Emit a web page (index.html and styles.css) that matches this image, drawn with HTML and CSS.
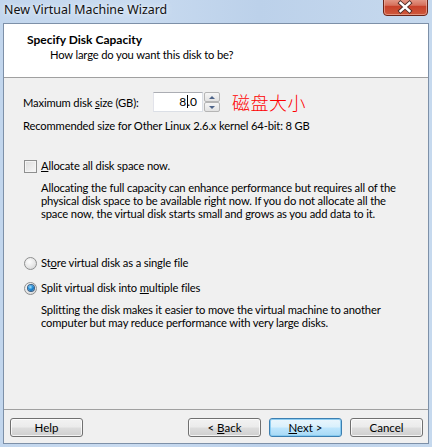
FILE: index.html
```html
<!DOCTYPE html>
<html>
<head>
<meta charset="utf-8">
<title>New Virtual Machine Wizard</title>
<link rel="stylesheet" href="styles.css">
</head>
<body>
<div class="window">
  <div class="titlebar">
    <span class="title">New Virtual Machine Wizard</span>
    <div class="close">
      <svg width="45" height="16" viewBox="0 0 45 16">
        <defs>
          <linearGradient id="cg" x1="0" y1="0" x2="0" y2="1">
            <stop offset="0" stop-color="#e9a99a"/>
            <stop offset="0.45" stop-color="#d6715c"/>
            <stop offset="0.5" stop-color="#c8412a"/>
            <stop offset="1" stop-color="#cf5a3c"/>
          </linearGradient>
        </defs>
        <path d="M0.5 -3 V12 Q0.5 15.5 4 15.5 H41 Q44.5 15.5 44.5 12 V-3 Z" fill="url(#cg)" stroke="#6a2418"/>
        <path d="M1.5 -3 V12 Q1.5 14.5 4 14.5 H41 Q43.5 14.5 43.5 12 V-3" fill="none" stroke="#f0b9aa" stroke-opacity="0.6"/>
        <path d="M17.5 3 L26.5 11 M26.5 3 L17.5 11" stroke="#4a2a26" stroke-width="4.2" stroke-linecap="square"/>
        <path d="M17.5 3 L26.5 11 M26.5 3 L17.5 11" stroke="#ffffff" stroke-width="2.4" stroke-linecap="square"/>
      </svg>
    </div>
  </div>
  <div class="client">
    <div class="header">
      <div class="h-title">Specify Disk Capacity</div>
      <div class="h-sub">How large do you want this disk to be?</div>
    </div>
    <div class="body">
      <div class="size-row">
        <label class="size-label">Maximum disk <u>s</u>ize (GB):</label>
        <div class="spin">
          <div class="spin-input">8<span class="caret"></span>.0</div>
          <div class="spin-btns">
            <div class="spin-btn"><span class="tri-up"></span></div>
            <div class="spin-btn"><span class="tri-down"></span></div>
          </div>
        </div>
        <span class="cn">磁盘大小</span>
      </div>
      <div class="rec">Recommended size for Other Linux 2.6.x kernel 64-bit: 8 GB</div>
      <div class="opt opt-check">
        <span class="checkbox"></span>
        <span><u>A</u>llocate all disk space now.</span>
      </div>
      <p class="desc">Allocating the full capacity can enhance performance but requires all of the<br>physical disk space to be available right now. If you do not allocate all the<br>space now, the virtual disk starts small and grows as you add data to it.</p>
      <div class="opt opt-r1">
        <span class="radio"></span>
        <span>St<u>o</u>re virtual disk as a single file</span>
      </div>
      <div class="opt opt-r2">
        <span class="radio checked"></span>
        <span>Split virtual disk into <u>m</u>ultiple files</span>
      </div>
      <p class="desc">Splitting the disk makes it easier to move the virtual machine to another<br>computer but may reduce performance with very large disks.</p>
    </div>
    <div class="footer">
      <button class="btn">Help</button>
      <div class="spacer"></div>
      <button class="btn">&lt; <u>B</u>ack</button>
      <button class="btn default"><u>N</u>ext &gt;</button>
      <button class="btn">Cancel</button>
    </div>
  </div>
</div>
</body>
</html>
```
FILE: styles.css
```css
html, body {
  margin: 0;
  padding: 0;
}

.window {
  width: 432px;
  height: 447px;
  box-sizing: border-box;
  padding: 0 3px 3px 3px;
  display: flex;
  flex-direction: column;
  background: linear-gradient(90deg, #c2d6ed 0%, #c9dbf0 30%, #bcd1ea 60%, #c6d9ee 100%);
  font-family: Lato, "Noto Sans", sans-serif;
  font-size: 11.2px;
  letter-spacing: -0.15px;
  color: #000;
}

.titlebar {
  height: 23px;
  display: flex;
  justify-content: space-between;
  align-items: flex-start;
  flex: none;
}

.title {
  font-family: "Noto Sans", sans-serif;
  font-size: 12.4px;
  letter-spacing: 0;
  line-height: 16px;
  padding: 2px 0 0 1px;
  color: #111;
  text-shadow: 0 0 6px #e8f0fa, 0 0 3px #e8f0fa;
}

.close {
  width: 45px;
  height: 16px;
  margin-right: 1px;
  line-height: 0;
}

.client {
  flex: 1;
  border: 1px solid #7d90a8;
  background: #f0f0f0;
  display: flex;
  flex-direction: column;
  min-height: 0;
}

.header {
  flex: none;
  background: #fff;
  border-bottom: 1px solid #a0a0a0;
  padding-top: 8px;
  height: 45px;
}

.h-title {
  font-weight: bold;
  font-size: 12px;
  letter-spacing: 0;
  line-height: 15px;
  padding-left: 23px;
}

.h-sub {
  line-height: 15px;
  padding-left: 46px;
}

.body {
  padding-left: 19px;
  flex: 1;
}

.size-row {
  margin-top: 14px;
  height: 20px;
  display: flex;
  align-items: center;
}

.size-label {
  width: 130px;
  flex: none;
}

.spin {
  display: flex;
  align-items: stretch;
  height: 20px;
}

.spin-input {
  width: 50px;
  box-sizing: border-box;
  border: 1px solid #dbdfe6;
  border-top-color: #abadb3;
  border-left-color: #e2e3ea;
  background: #fff;
  text-align: right;
  padding-right: 5px;
  line-height: 18px;
  font-size: 12px;
  letter-spacing: 0;
}

.caret {
  display: inline-block;
  width: 1px;
  height: 13px;
  margin: 0 -1px 0 1px;
  background: #000;
  vertical-align: -2px;
  position: relative;
}

.spin-btns {
  width: 16px;
  margin-left: 1px;
  display: flex;
  flex-direction: column;
}

.spin-btn {
  flex: 1;
  border: 1px solid #b5b5b5;
  border-radius: 2px;
  background: linear-gradient(#f6f6f6, #e2e2e2);
  display: flex;
  align-items: center;
  justify-content: center;
}

.tri-up {
  width: 0;
  height: 0;
  border-left: 3px solid transparent;
  border-right: 3px solid transparent;
  border-bottom: 3px solid #4e6489;
}

.tri-down {
  width: 0;
  height: 0;
  border-left: 3px solid transparent;
  border-right: 3px solid transparent;
  border-top: 3px solid #4e6489;
}

.cn {
  margin-left: 12px;
  color: #ff0000;
  font-family: "Noto Sans CJK SC", sans-serif;
  font-size: 18px;
  line-height: 20px;
  font-weight: 300;
  letter-spacing: 0.5px;
}

.rec {
  margin-top: 7px;
  line-height: 14px;
}

.opt {
  display: flex;
  align-items: center;
  line-height: 14px;
}

.opt-check {
  margin-top: 26px;
}

.opt-r1 {
  margin-top: 36px;
}

.opt-r2 {
  margin-top: 11px;
}

.checkbox {
  width: 11px;
  height: 11px;
  margin-left: 1px;
  margin-right: 4px;
  border: 1px solid #8e8f8f;
  background: linear-gradient(135deg, #dcdcdc, #f8f8f8);
  box-shadow: inset 0 0 0 1px #f4f4f4;
  flex: none;
}

.radio {
  width: 11px;
  height: 11px;
  margin-left: 1px;
  margin-right: 4px;
  border: 1px solid #8e8f8f;
  border-radius: 50%;
  background: radial-gradient(circle at 40% 35%, #fdfdfd 0%, #e6e6e6 55%, #cfcfcf 100%);
  flex: none;
  display: flex;
  align-items: center;
  justify-content: center;
}

.radio.checked::after {
  content: "";
  width: 6px;
  height: 6px;
  border-radius: 50%;
  background: radial-gradient(circle at 40% 35%, #a9e2fb 0%, #1e8ad6 45%, #0d4f8f 100%);
  box-shadow: 0 0 0 1px #365f88;
}

.desc {
  margin: 8px 0 0 0;
  padding-left: 18px;
  line-height: 13px;
  white-space: nowrap;
}

.footer {
  flex: none;
  border-top: 1px solid #a0a0a0;
  padding: 8px 5px 6px 6px;
  display: flex;
  gap: 8px;
}

.spacer {
  flex: 1;
}

.btn {
  width: 73px;
  height: 19px;
  box-sizing: border-box;
  padding: 0;
  border: 1px solid #707070;
  border-radius: 3px;
  background: linear-gradient(#f2f2f2 0%, #ebebeb 48%, #dddddd 52%, #cfcfcf 100%);
  box-shadow: inset 0 0 0 1px rgba(255, 255, 255, 0.75);
  font-family: inherit;
  font-size: 11.5px;
  letter-spacing: 0;
  color: #000;
  line-height: 15px;
}

.btn.default {
  border-color: #3c7fb1;
  background: linear-gradient(#eaf6fd 0%, #d9f0fc 48%, #bee6fd 52%, #a7d9f5 100%);
  box-shadow: inset 0 0 0 1px rgba(130, 200, 240, 0.9);
}
```
